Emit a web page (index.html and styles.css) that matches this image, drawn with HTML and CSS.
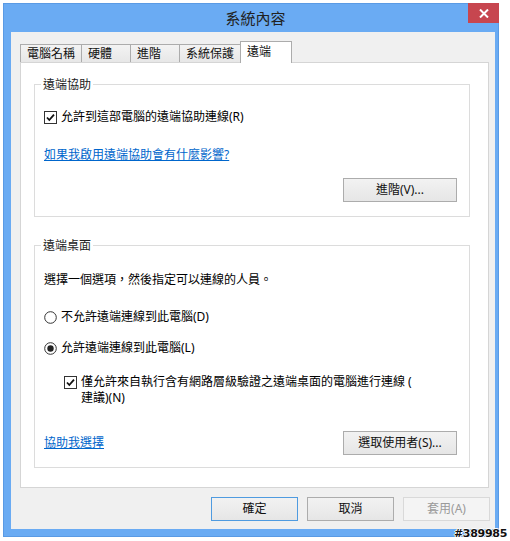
FILE: index.html
```html
<!DOCTYPE html>
<html lang="zh-Hant">
<head>
<meta charset="utf-8">
<title>系統內容</title>
<link rel="stylesheet" href="styles.css">
</head>
<body>
<div class="window">
  <div class="titlebar">
    <span class="title">系統內容</span>
    <div class="close">
      <svg width="10" height="9" viewBox="0 0 10 9"><path d="M1 0.5 L9 8.5 M9 0.5 L1 8.5" stroke="#fff" stroke-width="2" fill="none"/></svg>
    </div>
  </div>
  <div class="client">
    <div class="tabs">
      <div class="tab">電腦名稱</div>
      <div class="tab">硬體</div>
      <div class="tab">進階</div>
      <div class="tab">系統保護</div>
      <div class="tab active">遠端</div>
    </div>
    <div class="panel">
      <fieldset class="group group-assist">
        <legend>遠端協助</legend>
        <div class="option">
          <svg class="box" width="13" height="13" viewBox="0 0 13 13"><rect x="0.5" y="0.5" width="12" height="12" fill="#fff" stroke="#333"/><path d="M3 6.5 L5.3 9 L10 3.6" stroke="#111" stroke-width="1.8" fill="none"/></svg>
          <span>允許到這部電腦的遠端協助連線(R)</span>
        </div>
        <a class="link link-assist" href="#">如果我啟用遠端協助會有什麼影響?</a>
        <div class="btn-row">
          <button class="btn btn-wide">進階(V)...</button>
        </div>
      </fieldset>
      <fieldset class="group group-desktop">
        <legend>遠端桌面</legend>
        <p class="desc">選擇一個選項，然後指定可以連線的人員。</p>
        <div class="option radio-first">
          <svg class="box" width="13" height="13" viewBox="0 0 13 13"><circle cx="6.5" cy="6.5" r="5.8" fill="#fff" stroke="#333"/></svg>
          <span>不允許遠端連線到此電腦(D)</span>
        </div>
        <div class="option radio-second">
          <svg class="box" width="13" height="13" viewBox="0 0 13 13"><circle cx="6.5" cy="6.5" r="5.8" fill="#fff" stroke="#333"/><circle cx="6.5" cy="6.5" r="3.2" fill="#222"/></svg>
          <span>允許遠端連線到此電腦(L)</span>
        </div>
        <div class="option nested">
          <svg class="box" width="13" height="13" viewBox="0 0 13 13"><rect x="0.5" y="0.5" width="12" height="12" fill="#fff" stroke="#333"/><path d="M3 6.5 L5.3 9 L10 3.6" stroke="#111" stroke-width="1.8" fill="none"/></svg>
          <span>僅允許來自執行含有網路層級驗證之遠端桌面的電腦進行連線 (<br>建議)(N)</span>
        </div>
        <div class="bottom-row">
          <a class="link" href="#">協助我選擇</a>
          <button class="btn btn-wide">選取使用者(S)...</button>
        </div>
      </fieldset>
    </div>
    <div class="footer">
      <button class="btn btn-default">確定</button>
      <button class="btn">取消</button>
      <button class="btn btn-disabled">套用(A)</button>
    </div>
  </div>
</div>
<div class="watermark">#389985</div>
</body>
</html>
```
FILE: styles.css
```css
* { box-sizing: border-box; }
html, body {
  margin: 0;
  padding: 0;
  background: #fff;
  width: 510px;
  height: 541px;
  overflow: hidden;
}
body {
  position: relative;
  font-family: "Noto Sans", "Noto Sans CJK TC", sans-serif;
  font-size: 12px;
  color: #000;
}
.window {
  margin: 3px 0 0 3px;
  width: 496px;
  height: 534px;
  background: #6aabf3;
  box-shadow: inset 0 0 0 1px #5a9ae4;
  display: flex;
  flex-direction: column;
}
.titlebar {
  height: 29px;
  display: grid;
  grid-template-columns: 40px 1fr 31px;
  align-items: start;
}
.title {
  grid-column: 2;
  text-align: center;
  font-family: "Noto Sans CJK TC", sans-serif;
  font-size: 15px;
  line-height: 29px;
  color: #222;
}
.close {
  grid-column: 3;
  width: 31px;
  height: 20px;
  background: #c7464f;
  display: flex;
  align-items: center;
  justify-content: center;
}
.client {
  flex: 1;
  margin: 0 4px 8px 8px;
  background: #f0f0f0;
  padding: 9px 0 0 9px;
}
.tabs {
  display: flex;
  height: 21px;
  align-items: flex-end;
  position: relative;
  z-index: 1;
}
.tab {
  height: 18px;
  min-width: 50px;
  padding: 0 6px;
  border: 1px solid #acacac;
  border-bottom: none;
  background: linear-gradient(#f3f3f3, #e7e7e7);
  line-height: 16px;
  font-family: "Noto Sans CJK TC", sans-serif;
  margin-left: -1px;
  color: #111;
}
.tab:first-child { margin-left: 0; }
.tab.active {
  height: 22px;
  min-width: 52px;
  background: #fff;
  margin-bottom: -1px;
  padding-top: 0;
  line-height: 17px;
}
.panel {
  width: 469px;
  height: 426px;
  border: 1px solid #d5d5d5;
  background: #fff;
  padding: 13px 0 0 13px;
}
.group {
  margin: 0;
  width: 436px;
  border: 1px solid #dcdcdc;
  padding: 0 12px 14px 9px;
  min-width: 0;
}
.group legend {
  padding: 0 2px;
  margin-left: -3px;
  line-height: 16px;
  font-family: "Noto Sans CJK TC", sans-serif;
  color: #222;
}
.group-desktop {
  margin-top: 20px;
  padding-bottom: 12px;
}
.option {
  display: flex;
  align-items: flex-start;
  line-height: 16px;
}
.option .box {
  flex: none;
  margin: 2px 4px 0 0;
}
.group-assist .option { margin-top: 17px; }
.link {
  display: block;
  line-height: 16px;
  color: #0066cc;
  text-decoration: underline;
}
.link-assist { margin-top: 22px; }
.btn-row {
  margin-top: 15px;
  display: flex;
  justify-content: flex-end;
}
.btn {
  height: 24px;
  width: 87px;
  border: 1px solid #acacac;
  background: linear-gradient(#f2f2f2, #e6e6e6);
  font-family: "Noto Sans", "Noto Sans CJK TC", sans-serif;
  font-size: 12px;
  color: #111;
  padding: 0;
  margin: 0;
  line-height: 20px;
}
.btn-wide { width: 114px; }
.btn-default { border-color: #4f9be0; }
.btn-disabled {
  border-color: #d9d9d9;
  background: #f4f4f4;
  color: #9a9a9a;
}
.desc {
  margin: 19px 0 0;
  line-height: 16px;
}
.radio-first { margin-top: 21px; }
.radio-second { margin-top: 15px; }
.nested {
  margin: 18px 0 0 20px;
}
.bottom-row {
  margin-top: 25px;
  display: flex;
  justify-content: space-between;
  align-items: center;
}
.footer {
  margin-top: 9px;
  display: flex;
  justify-content: flex-end;
  gap: 9px;
  padding-right: 5px;
}
.watermark {
  position: absolute;
  right: 3px;
  bottom: 1px;
  font-family: "DejaVu Sans", sans-serif;
  font-weight: bold;
  font-size: 11px;
  line-height: 12px;
  color: #111;
  text-shadow: 1px 0 0 #fff, -1px 0 0 #fff, 0 1px 0 #fff, 0 -1px 0 #fff;
  letter-spacing: -0.3px;
}
```
